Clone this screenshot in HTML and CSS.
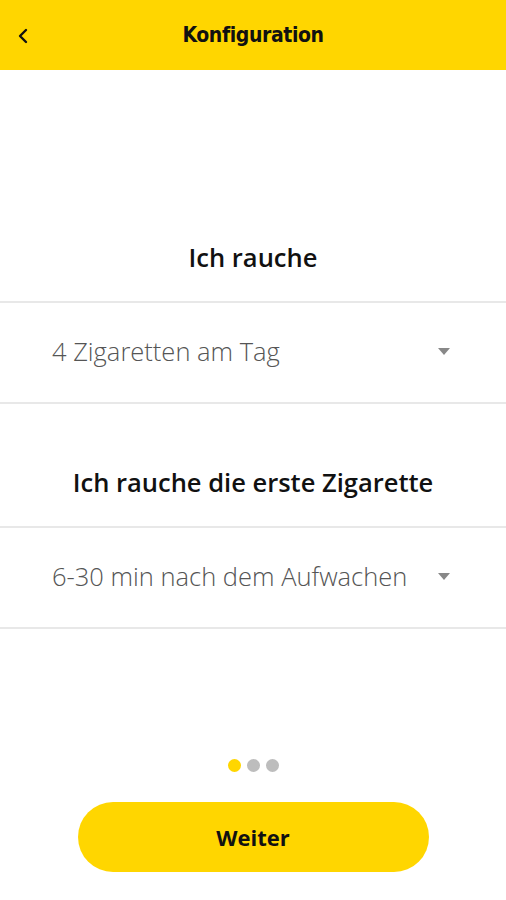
FILE: index.html
```html
<!DOCTYPE html>
<html lang="de">
    <head>
        <meta charset="UTF-8" />
        <meta name="viewport" content="width=device-width, initial-scale=1.0" />
        <title>Konfiguration</title>
        <link rel="stylesheet" href="styles.css">
    </head>
    <body>
        <div class="app">
            <header class="app-bar">
                <button class="back-btn" type="button" aria-label="Zurück">
                    <svg width="14" height="16" viewBox="0 0 14 16">
                        <path d="M10 2 L4 8 L10 14" fill="none" stroke="#111" stroke-width="2.4" stroke-linecap="round" stroke-linejoin="round" />
                    </svg>
                </button>
                <h1 class="app-title">Konfiguration</h1>
            </header>

            <main class="content">
                <section class="question">
                    <h2 class="question-head">Ich rauche</h2>
                    <div class="select-row">
                        <span class="select-value">4 Zigaretten am Tag</span>
                        <span class="select-arrow"></span>
                    </div>
                </section>
                <section class="question">
                    <h2 class="question-head">Ich rauche die erste Zigarette</h2>
                    <div class="select-row">
                        <span class="select-value">6-30 min nach dem Aufwachen</span>
                        <span class="select-arrow"></span>
                    </div>
                </section>
            </main>

            <footer class="footer">
                <ul class="pager">
                    <li class="pager-dot active"></li>
                    <li class="pager-dot"></li>
                    <li class="pager-dot"></li>
                </ul>
                <button class="next-btn" type="button">Weiter</button>
            </footer>
        </div>
    </body>
</html>
```

FILE: styles.css
```css
html,
body,
h1,
h2,
ul,
li {
    padding: 0;
    margin: 0;
}
ul,
li {
    list-style: none;
}
html,
body {
    height: 100%;
}
body {
    font-family: "Open Sans", "Noto Sans", sans-serif;
    background-color: #fff;
    color: #111;
}

.app {
    display: flex;
    flex-flow: column;
    height: 100%;
}

.app-bar {
    display: flex;
    align-items: center;
    justify-content: center;
    position: relative;
    height: 70px;
    background-color: #ffd600;
}
.back-btn {
    position: absolute;
    left: 16px;
    top: 28px;
    padding: 0;
    border: 0;
    background: none;
    display: flex;
}
.app-title {
    font-family: "DejaVu Sans", sans-serif;
    font-stretch: condensed;
    font-size: 21px;
    font-weight: 700;
    letter-spacing: -0.4px;
    color: #111;
}

.content {
    padding-top: 173px;
}
.question + .question {
    padding-top: 64px;
}
.question-head {
    text-align: center;
    font-size: 25.5px;
    font-weight: 600;
    line-height: 28px;
    margin-bottom: 30px;
    color: #111;
}
.select-row {
    display: flex;
    align-items: center;
    box-sizing: border-box;
    height: 103px;
    padding: 0 56px 4px 52px;
    border-top: 2px solid #e8e8e8;
    border-bottom: 2px solid #e8e8e8;
}
.select-value {
    flex: 1;
    font-size: 25.5px;
    font-weight: 300;
    color: #555;
}
.select-arrow {
    width: 0;
    height: 0;
    margin-top: 2px;
    border-left: 6px solid transparent;
    border-right: 6px solid transparent;
    border-top: 7px solid #888;
}

.footer {
    margin-top: auto;
    display: flex;
    flex-flow: column;
    align-items: center;
    padding-bottom: 28px;
}
.pager {
    display: flex;
    gap: 6px;
    margin-bottom: 30px;
}
.pager-dot {
    width: 13px;
    height: 13px;
    border-radius: 50%;
    background-color: #bdbdbd;
}
.pager-dot.active {
    background-color: #ffd600;
}
.next-btn {
    width: 351px;
    height: 70px;
    border: 0;
    border-radius: 35px;
    background-color: #ffd600;
    font-family: "Open Sans", "Noto Sans", sans-serif;
    font-size: 22px;
    font-weight: 700;
    color: #111;
}
```
